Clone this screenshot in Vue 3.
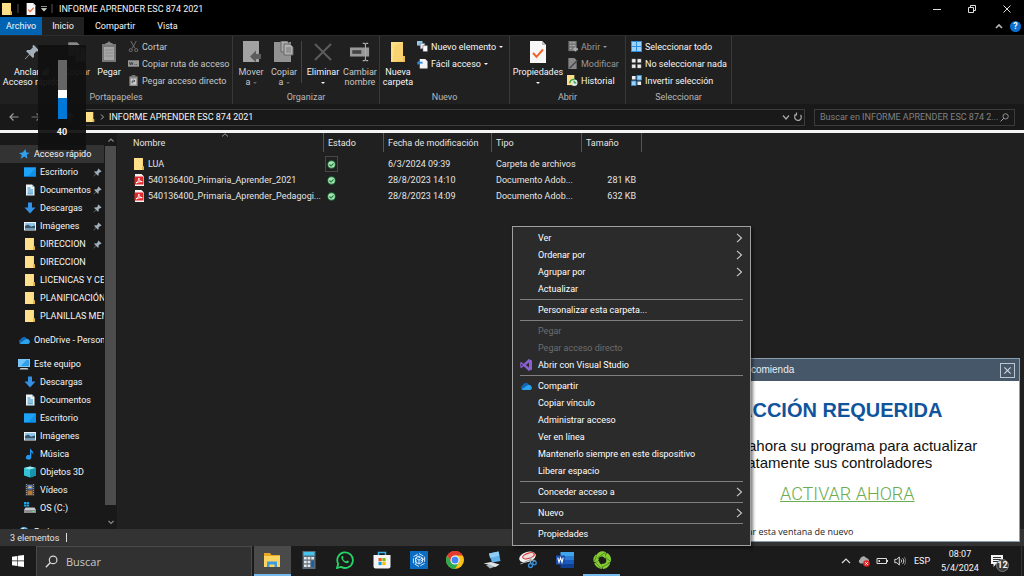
<script setup>
const pinned = [
  { t: 'Escritorio', i: 'desk', pin: true },
  { t: 'Documentos', i: 'doc', pin: true },
  { t: 'Descargas', i: 'down', pin: true },
  { t: 'Imágenes', i: 'img', pin: true },
  { t: 'DIRECCION', i: 'folder', pin: true },
  { t: 'DIRECCION', i: 'folder' },
  { t: 'LICENICAS Y CERT', i: 'folder' },
  { t: 'PLANIFICACIÓN', i: 'folder' },
  { t: 'PLANILLAS MENS', i: 'folder' },
]
const computer = [
  { t: 'Descargas', i: 'down' },
  { t: 'Documentos', i: 'doc' },
  { t: 'Escritorio', i: 'desk' },
  { t: 'Imágenes', i: 'img' },
  { t: 'Música', i: 'music' },
  { t: 'Objetos 3D', i: 'cube' },
  { t: 'Vídeos', i: 'video' },
  { t: 'OS (C:)', i: 'disk' },
]
const files = [
  { n: 'LUA', i: 'folder', d: '6/3/2024 09:39', t: 'Carpeta de archivos', s: '', focus: true },
  { n: '540136400_Primaria_Aprender_2021', i: 'pdf', d: '28/8/2023 14:10', t: 'Documento Adob...', s: '281 KB' },
  { n: '540136400_Primaria_Aprender_Pedagogi...', i: 'pdf', d: '28/8/2023 14:09', t: 'Documento Adob...', s: '632 KB' },
]
const menu = [
  [{ t: 'Ver', sub: true }, { t: 'Ordenar por', sub: true }, { t: 'Agrupar por', sub: true }, { t: 'Actualizar' }],
  [{ t: 'Personalizar esta carpeta...' }],
  [{ t: 'Pegar', off: true }, { t: 'Pegar acceso directo', off: true }, { t: 'Abrir con Visual Studio', i: 'vs' }],
  [
    { t: 'Compartir', i: 'cloud' }, { t: 'Copiar vínculo' }, { t: 'Administrar acceso' },
    { t: 'Ver en línea' }, { t: 'Mantenerlo siempre en este dispositivo' }, { t: 'Liberar espacio' },
  ],
  [{ t: 'Conceder acceso a', sub: true }],
  [{ t: 'Nuevo', sub: true }],
  [{ t: 'Propiedades' }],
]
const apps = [
  { i: 'explorer', n: 'Explorador de archivos', on: true },
  { i: 'calc', n: 'Calculadora' },
  { i: 'whatsapp', n: 'WhatsApp' },
  { i: 'store', n: 'Tienda' },
  { i: 'hex', n: 'Objetos' },
  { i: 'chrome', n: 'Chrome' },
  { i: 'remote', n: 'Equipo remoto' },
  { i: 'snip', n: 'Recortes' },
  { i: 'word', n: 'Word' },
  { i: 'green', n: 'Controladores', run: true },
]
</script>

<template>
  <svg class="sprite" aria-hidden="true">
    <symbol id="folder" viewBox="0 0 12 12"><path d="M1 0h9v8.500h1V12H1z" fill="#f3cf65" /><path d="M1 0h8.500v12H1z" fill="#ffe08a" /><path d="M9 8.500h2V12H9z" fill="#e3b548" /></symbol>
    <symbol id="desk" viewBox="0 0 12 12"><path d="M0 1.500h12v9H0z" fill="#0f8fe8" /><path d="M0 1.500h12L4 10.500H0z" fill="#1ea3fb" /><path d="M0 10h12v1H0z" fill="#0a6fc0" /></symbol>
    <symbol id="doc" viewBox="0 0 12 12"><path d="M2 .5h6l2.500 2.500v8.500H2z" fill="#eef3f6" /><path d="M8 .5V3h2.500z" fill="#b6c3cc" /><path d="M3.500 4h3M3.500 6h5.500M3.500 8h5.500M3.500 9.800h5.500" stroke="#2e8fc7" stroke-width="1" /></symbol>
    <symbol id="down" viewBox="0 0 12 12"><path d="M4 .5h4V5.500h3.500L6 11.500.5 5.500H4z" fill="#3391e6" /></symbol>
    <symbol id="img" viewBox="0 0 12 12"><path d="M0 2h12v8.500H0z" fill="#eef2f4" /><path d="M1 3h10v3H1z" fill="#8fc7ec" /><path d="M1 6l3-1.500 3 2 4-1v4H1z" fill="#35556b" /><path d="M1 8h10v1.500H1z" fill="#6c9cc0" /></symbol>
    <symbol id="music" viewBox="0 0 12 12"><path d="M6 0c.5 2 4 2.800 3.300 6.800-.5-1.800-1.300-2.300-2-2.300v5A2.700 2.300 0 1 1 6 7.300z" fill="#2498f0" /></symbol>
    <symbol id="cube" viewBox="0 0 12 12"><path d="M0 2l6-1.500L12 2v7.500l-6 2-6-2z" fill="#35c1d6" /><path d="M0 2l6-1.500L12 2 6 3.500z" fill="#9beaf2" /><path d="M6 3.500L12 2v7.500l-6 2z" fill="#1795ae" /></symbol>
    <symbol id="video" viewBox="0 0 12 12"><path d="M1.500 0h9v12h-9z" fill="#3a3a3f" /><path d="M3.500 1h5v4.500h-5z" fill="#5e82c9" /><path d="M3.500 6.500h5V11h-5z" fill="#b5783c" /><path d="M2.500 0v12M9.500 0v12" stroke="#aaa" stroke-width=".8" stroke-dasharray="1 1" /><path d="M4 4l2-2 2 2z" fill="#e8c850" /></symbol>
    <symbol id="disk" viewBox="0 0 12 12"><path d="M1.500 5.500h9L12 8v3H0V8z" fill="#c9ccce" /><path d="M0 8h12v3H0z" fill="#8b8f92" /><path d="M8.500 9h2v1h-2z" fill="#4ef08c" /><path d="M0 0h2.300v2H0zM2.700 0H5v2H2.700zM0 2.400h2.300v2H0zM2.700 2.400H5v2H2.700z" fill="#1ba6ea" /></symbol>
    <symbol id="star" viewBox="0 0 12 12"><path d="M7.500 1l.7 3.400 3.500.3-3 2 .7 4.100-3-2.200-3.800 2.200 1.200-3.800L1 4.900l3.700-.3z" fill="#2ea3f2" /></symbol>
    <symbol id="cloud" viewBox="0 0 12 8"><path d="M3 8a2.500 2.500 0 0 1-.4-4.800 3.500 3.500 0 0 1 6.200-.8A2.900 2.900 0 0 1 9.500 8z" fill="#1267b5" /><path d="M3 8l-1.500-.6L7.500 3.300c2-1 4 .3 4.300 2A2.200 2.200 0 0 1 9.600 8z" fill="#2ba4ec" /></symbol>
    <symbol id="pc" viewBox="0 0 12 12"><path d="M0 1h12v8H0z" fill="#8fd3fb" /><path d="M.8 1.800h10.400v6.400H.8z" fill="#2f9fe8" /><path d="M.8 1.800h8L2.500 8.200H.8z" fill="#6fc4f8" /><path d="M2.500 10h7l1 1.500h-9z" fill="#c6cdd2" /></symbol>
    <symbol id="net" viewBox="0 0 12 12"><circle cx="6" cy="6" r="5" fill="#65b8e8" /><path d="M2 4l3-2.500 2 2L4 6z" fill="#d5eefa" /></symbol>
    <symbol id="pin" viewBox="0 0 10 10"><path d="M6 .5L9.500 4 8.500 4.700 7.800 4.500 6.200 6.200 6.300 8 5.500 8.700 3.500 6.700 1 9.300.5 9.500.7 9 3.300 6.400 1.300 4.500 2 3.700 3.800 3.800 5.500 2.200 5.300 1.300z" fill="#a3afb8" /></symbol>
    <symbol id="pdf" viewBox="0 0 12 12"><path d="M2 0h6.500L11 2.500V12H2z" fill="#f6f0f0" /><path d="M1.500 2.500h9v8h-9z" fill="#e02a2a" /><path d="M3 9C5.200 7.800 6 5.800 5.800 4c.2 2.300 1.200 3.300 3.400 3.700C7 7.500 5 8 3 9z" stroke="#fff" stroke-width="1" fill="none" /></symbol>
    <symbol id="ok" viewBox="0 0 10 10"><circle cx="5" cy="5" r="4.600" fill="#1f7a3a" /><circle cx="5" cy="5" r="3.700" fill="#a9e3b8" /><path d="M2.800 5l1.700 1.700L7.300 3.700" stroke="#1b7034" stroke-width="1.200" fill="none" /></symbol>
    <symbol id="vs" viewBox="0 0 12 12"><path d="M8.800 0L12 1.400v9.200L8.800 12 3.700 7.200 1.400 9 .2 8.400V3.600L1.400 3l2.300 1.800zM9 3.600L5.900 6 9 8.400zM1.400 4.600v2.800L2.800 6z" fill="#8a5fd0" fill-rule="evenodd" /></symbol>
    <symbol id="sheetcheck" viewBox="0 0 16 22"><path d="M0 0h12l4 4v18H0z" fill="#f7f7f7" /><path d="M12 0v4h4z" fill="#bdbdbd" /><path d="M3 12l3.500 3.800L13 8.500" stroke="#f0642d" stroke-width="2" fill="none" /></symbol>
    <symbol id="lens" viewBox="0 0 12 12"><circle cx="7.500" cy="4.500" r="3.500" fill="none" stroke="currentColor" stroke-width="1.100" /><path d="M5 7L.8 11.200" stroke="currentColor" stroke-width="1.300" /></symbol>
    <symbol id="explorer" viewBox="0 0 18 16"><path d="M1 1h6l1.500 2H17v11H1z" fill="#e9a823" /><path d="M1 4h16v11H1z" fill="#fcd462" /><path d="M4 15V9.500h10V15h-2.500v-2.500h-5V15z" fill="#3e9be0" /></symbol>
    <symbol id="calc" viewBox="0 0 18 18"><path d="M2.500 0h13v18h-13z" fill="#5c6b78" /><path d="M3.500 1h11v3.500h-11z" fill="#45c4f0" /><path d="M4 6h2.700v2.500H4zM7.600 6h2.700v2.500H7.600zM11.300 6H14v2.500h-2.700zM4 9.700h2.700v2.500H4zM7.600 9.700h2.700v2.500H7.600zM4 13.500h2.700V16H4zM7.600 13.500h2.700V16H7.600z" fill="#e3e8ec" /><path d="M11.300 9.700H14V16h-2.700z" fill="#1c5fa8" /></symbol>
    <symbol id="whatsapp" viewBox="0 0 18 18"><path d="M1 17l1.200-4.200A7.800 7.800 0 1 1 5.200 15.900z" fill="none" stroke="#25d366" stroke-width="1.800" /><path d="M5.500 5.500c.8-1.200 1.500-.9 2 .8.200.7-.8 1-.4 1.600.8 1.300 1.500 1.900 2.800 2.400.6.200.9-1 1.500-.8 1.800.7 2 1.100.9 2.200-2.400 2-8-3-6.800-6.200z" fill="#25d366" /></symbol>
    <symbol id="store" viewBox="0 0 18 18"><path d="M5.500 5V1.500h7V5" fill="none" stroke="#35b6e8" stroke-width="1.500" /><path d="M.5 4h17v11.500a2 2 0 0 1-2 2h-13a2 2 0 0 1-2-2z" fill="#f4f4f4" /><path d="M5.500 7h3.200v3.200H5.500z" fill="#f25022" /><path d="M9.400 7h3.200v3.200H9.400z" fill="#7fba00" /><path d="M5.500 10.900h3.200v3.200H5.500z" fill="#00a4ef" /><path d="M9.400 10.900h3.200v3.200H9.400z" fill="#ffb900" /></symbol>
    <symbol id="hex" viewBox="0 0 18 18"><path d="M0 0h18v18H0z" fill="#0b6cc4" /><g fill="none" stroke="#cfe6fa" stroke-width="1"><path d="M9 2.500l5.600 3.200v6.600L9 15.500l-5.600-3.200V5.700z" stroke-dasharray="5 1.500" /><path d="M9 5l3.500 2v4L9 13l-3.500-2V7zM5.500 7L9 9l3.500-2M9 9v4M6 4.500l4 2.300M14 8l-3.500 2M6 13V9" /></g></symbol>
    <symbol id="chrome" viewBox="0 0 18 18"><circle cx="9" cy="9" r="9" fill="#fbc116" /><path d="M1.200 4.500A9 9 0 0 1 16.800 4.500H9L5.100 11.250z" fill="#e33b2e" /><path d="M1.200 4.500A9 9 0 0 0 9 18l3.900-6.750H5.100z" fill="#2da94f" /><circle cx="9" cy="9" r="4.500" fill="#fff" /><circle cx="9" cy="9" r="3.500" fill="#4285f4" /></symbol>
    <symbol id="remote" viewBox="0 0 18 18"><path d="M6 2.500l9.500-2L17.500 10 9 11.500z" fill="#5fb2ea" /><path d="M6 2.500l9.500-2 1 4L7 7z" fill="#8fcdf4" /><path d="M.5 12.500L8 11l8.500 2.500-4 2.500-4.500-.5L5 13.500z" fill="#dfe4e8" /><path d="M3 14l4-.5 4 2.500-4 1.500z" fill="#aab4bb" /></symbol>
    <symbol id="snip" viewBox="0 0 18 18"><ellipse cx="8.500" cy="6" rx="8.500" ry="5" transform="rotate(-18 8.500 6)" fill="#f2f2f2" /><ellipse cx="9.500" cy="4.800" rx="6" ry="2.600" transform="rotate(-18 9.500 4.800)" fill="#f4dcdc" stroke="#d43a33" stroke-width="1.200" /><path d="M1.500 13l9-4 6 .5M12 6l-.5 7" stroke="#9aa4ab" stroke-width="1.200" fill="none" /><circle cx="11.500" cy="14.500" r="2" fill="none" stroke="#3a8fd8" stroke-width="1.300" /><circle cx="15.500" cy="12" r="1.800" fill="none" stroke="#3a8fd8" stroke-width="1.300" /></symbol>
    <symbol id="word" viewBox="0 0 18 18"><path d="M4.500 1H18v4.200H4.500z" fill="#41a5ee" /><path d="M4.500 5H18v4.200H4.500z" fill="#2b7cd3" /><path d="M4.500 9H18v4H4.500z" fill="#185abd" /><path d="M4.500 13H18v4H4.500z" fill="#103f91" /><path d="M0 4.500h9v9H0z" fill="#1b4fae" /><path d="M1.800 6.700l1.200 4.600 1.500-4.400L6 11.300l1.200-4.600" stroke="#fff" stroke-width="1.100" fill="none" /></symbol>
    <symbol id="green" viewBox="0 0 18 18"><g fill="#86cc34"><path d="M3 5C4.500.5 9.500-1 13 1.200L12 7.500C9.500 4.500 7 5 5 8z" /><path d="M13.800 1.700c3.800 1.800 4.800 5.500 3.900 9L12.800 12c1-3 .4-4.200-1-5.500z" /><path d="M17.300 11.500c-1 4-4.300 6.500-7.500 6.400L8.500 13c2.500 0 3.800-.7 5-2z" /><path d="M8.800 17.900C5 17.500 2.200 15.200 1.200 12.200L6 9.800c.2 2 1 3 3 4z" /><path d="M1 11.300C-.5 8 .8 5.500 3 3.500L6 9c-1 .3-1 .9-1 1.500z" /></g><path d="M4.500 7L12 1.500M12.500 6.500l4.700 3.500M16.500 12L9.500 16M7.500 17L3 12M1.200 10.500L3.500 5" stroke="#3f8014" stroke-width=".8" /></symbol>
  </svg>

  <div class="screen">
    <header class="titlebar">
      <svg class="i12"><use href="#folder" /></svg>
      <i class="tick"></i>
      <svg class="i12"><use href="#sheetcheck" /></svg>
      <svg class="caret" viewBox="0 0 6 6"><path d="M0 .5h6M.5 2.500h5L3 5.200z" stroke="#ccc" stroke-width=".7" fill="#ccc" /></svg>
      <i class="tick"></i>
      <h1>INFORME APRENDER ESC 874 2021</h1>
      <div class="winbtns">
        <button aria-label="Minimizar"><svg viewBox="0 0 10 10"><path d="M1 5.500h8" stroke="#ddd" /></svg></button>
        <button aria-label="Restaurar"><svg viewBox="0 0 10 10"><path d="M1.500 3.500h5v5h-5zM3.500 3V1.500h5v5H7" stroke="#ddd" fill="none" /></svg></button>
        <button aria-label="Cerrar"><svg viewBox="0 0 10 10"><path d="M1.500 1.500l7 7M8.500 1.500l-7 7" stroke="#ddd" /></svg></button>
      </div>
    </header>

    <nav class="tabs">
      <button class="file">Archivo</button>
      <button class="current">Inicio</button>
      <button>Compartir</button>
      <button>Vista</button>
      <span class="tabend">
        <svg viewBox="0 0 8 6"><path d="M1 5l3-3 3 3" stroke="#bbb" stroke-width="1.600" fill="none" /></svg>
        <button class="help" aria-label="Ayuda">?</button>
      </span>
    </nav>

    <section class="ribbon">
      <div class="group g1">
        <div class="tools">
          <button class="big w62"><svg viewBox="0 0 16 22"><use href="#pin" x="0" y="3" width="16" height="16" /></svg><span>Anclar al<br />Acceso rápido</span></button>
          <button class="big w28 dim"><svg viewBox="0 0 20 22"><path d="M1 1h9l3 3v11H1zM8 6h8l3 3v12H8z" fill="#8a8a8a" stroke="#222" stroke-width=".6" /></svg><span>Copiar</span></button>
          <button class="big w36"><svg viewBox="0 0 16 22"><path d="M1 3h14v18H1z" fill="#777" /><path d="M3 6h10v13H3z" fill="#a6a6a6" /><path d="M4.500 4V2h2a1.500 1.500 0 0 1 3 0h2v2z" fill="#888" /><path d="M4 9h8M4 12h8M4 15h8" stroke="#8c8c8c" /></svg><span>Pegar</span></button>
          <div class="list dim">
            <button><svg viewBox="0 0 12 12"><path d="M3 0l4.500 8M9 0L4.500 8" stroke="#777" /><circle cx="3" cy="10" r="1.700" fill="none" stroke="#777" /><circle cx="9" cy="10" r="1.700" fill="none" stroke="#777" /></svg>Cortar</button>
            <button><svg viewBox="0 0 12 12"><path d="M0 2.500h12v7H0z" fill="#999" /><path d="M1.500 4.500l1 3 1-3 1 3 1-3M7 7h1M9 7h1" stroke="#333" fill="none" stroke-width=".8" /></svg>Copiar ruta de acceso</button>
            <button><svg viewBox="0 0 12 12"><path d="M1.500 1.500h9V12h-9z" fill="#8f8f8f" /><path d="M4 0h4v2.500H4z" fill="#777" /><path d="M3 4h6v6.500H3z" fill="#ccc" /><path d="M4.500 9V6.500H7M6 5l1.500 1.500L6 8" stroke="#444" fill="none" /></svg>Pegar acceso directo</button>
          </div>
        </div>
        <p>Portapapeles</p>
      </div>
      <div class="group g2">
        <div class="tools">
          <button class="big w36 dim"><svg viewBox="0 0 20 22"><path d="M2 0h16v21H2z" fill="#a2a2a2" /><path d="M9 15.500l6-6v3.500h6v5h-6v3.500z" fill="#5c5c5c" /></svg><span>Mover<br />a <i class="dn"></i></span></button>
          <button class="big w28 dim"><svg viewBox="0 0 20 22"><path d="M0 1h17v20H0z" fill="#929292" /><path d="M7 0h6l2 2v9H7z" fill="#aaa" stroke="#666" /><path d="M10 3h6l3 3v8h-9z" fill="#b2b2b2" stroke="#666" /><path d="M12 7h5M12 9h5M12 11h5" stroke="#777" /></svg><span>Copiar<br />a <i class="dn"></i></span></button>
          <i class="minisep"></i>
          <button class="big w36"><svg viewBox="0 0 20 22"><path d="M2 3l16 16M18 3L2 19" stroke="#5d5d5d" stroke-width="2" /></svg><span>Eliminar<br /><i class="dn"></i></span></button>
          <button class="big w36 dim"><svg viewBox="0 0 22 22"><path d="M0 6h21v10H0z" fill="#999" /><path d="M2.500 9h10v4h-10z" fill="#444" /><path d="M14 1.500h2l1 1 1-1h2M17 2.500v17M14 20.500h2l1-1 1 1h2" stroke="#aaa" fill="none" stroke-width="1.200" /></svg><span>Cambiar<br />nombre</span></button>
        </div>
        <p>Organizar</p>
      </div>
      <div class="group g3">
        <div class="tools">
          <button class="big w36"><svg viewBox="0 0 16 22"><path d="M1 1h12v14h2v6H1z" fill="#eebf55" /><path d="M1 1h12v19H4L1 21z" fill="#ffdf86" /><path d="M3 21l1-16 9-4v19z" fill="#f9d272" /></svg><span>Nueva<br />carpeta</span></button>
          <div class="list">
            <button><svg viewBox="0 0 12 12"><path d="M0 0h6v5H0z" fill="#8fc9ee" /><path d="M3.500 2.500h5v6h-5z" fill="#e8e8e8" stroke="#456" stroke-width=".5" /><path d="M6.500 5h5v6.500h-5z" fill="#f8f8f8" stroke="#557" stroke-width=".5" /></svg>Nuevo elemento <i class="dn"></i></button>
            <button><svg viewBox="0 0 12 12"><path d="M3 1h6l2.500 2.500v8H3z" fill="#f4f4f4" /><path d="M0 5l3-2.500V4h3v2.500C4 5.500 2 6 1 8z" fill="#2b8be0" /></svg>Fácil acceso <i class="dn"></i></button>
          </div>
        </div>
        <p>Nuevo</p>
      </div>
      <div class="group g4">
        <div class="tools">
          <button class="big w56"><svg viewBox="0 0 16 22"><use href="#sheetcheck" width="16" height="22" /></svg><span>Propiedades<br /><i class="dn"></i></span></button>
          <div class="list">
            <button class="off"><svg viewBox="0 0 12 12"><path d="M1.500 0h9v11h-9z" fill="#777" /><path d="M3 2h2M3 5h2M3 8h2M6 2h3M6 5h3" stroke="#bbb" /><path d="M6 9l4-3v2h2v2h-2v2z" fill="#aaa" /></svg>Abrir <i class="dn"></i></button>
            <button class="off"><svg viewBox="0 0 12 12"><path d="M1.500 0H8l2.500 2.500V12h-9z" fill="#888" /><path d="M2 11L11 2l1 1-8.500 8.500z" fill="#444" /></svg>Modificar</button>
            <button><svg viewBox="0 0 12 12"><path d="M0 0h8v11H0z" fill="#ffe08a" /><circle cx="8" cy="8.500" r="3.500" fill="#dfe6e2" /><path d="M3 9c0-3 2-4.500 5-4M8 8.500V6.500M8 8.500h2" stroke="#36a845" stroke-width="1.600" fill="none" /></svg>Historial</button>
          </div>
        </div>
        <p>Abrir</p>
      </div>
      <div class="group g5">
        <div class="tools">
          <div class="list far">
            <button><svg viewBox="0 0 12 12"><path d="M0 0h12v12H0z" fill="#2d8fdd" /><path d="M1 1h4.400v4.400H1zM6.600 1H11v4.400H6.600zM1 6.600h4.400V11H1zM6.600 6.600H11V11H6.600z" fill="#9dd3f8" /></svg>Seleccionar todo</button>
            <button><svg viewBox="0 0 12 12"><path d="M1 1h4v4H1zM7 1h4v4H7zM1 7h4v4H1zM7 7h4v4H7z" fill="#eee" stroke="#888" stroke-width=".4" /></svg>No seleccionar nada</button>
            <button><svg viewBox="0 0 12 12"><path d="M1 1h4v4H1zM7 7h4v4H7z" fill="#eee" /><path d="M6.500.5h5v5h-5zM.5 6.500h5v5h-5z" fill="#9dd3f8" stroke="#2d8fdd" /></svg>Invertir selección</button>
          </div>
        </div>
        <p>Seleccionar</p>
      </div>
    </section>

    <section class="address">
      <button class="arrow" aria-label="Atrás"><svg viewBox="0 0 10 10"><path d="M9.500 5H1M4.500 1.500L1 5l3.500 3.500" stroke="#999" stroke-width="1.200" fill="none" /></svg></button>
      <button class="arrow" aria-label="Adelante"><svg viewBox="0 0 10 10"><path d="M.5 5H9M5.500 1.500L9 5 5.500 8.500" stroke="#777" stroke-width="1.200" fill="none" /></svg></button>
      <button class="arrow up" aria-label="Subir"><svg viewBox="0 0 10 10"><path d="M5 9.500V1M1.500 4.500L5 1l3.500 3.500" stroke="#999" stroke-width="1.200" fill="none" /></svg></button>
      <div class="path">
        <svg class="pfolder"><use href="#folder" /></svg>
        <svg class="pchev" viewBox="0 0 6 6"><path d="M2 .5L4.500 3 2 5.500" stroke="#aaa" fill="none" /></svg>
        <span>INFORME APRENDER ESC 874 2021</span>
        <svg class="pico" viewBox="0 0 10 10"><path d="M2 3.500L5 7l3-3.500" stroke="#aaa" stroke-width="1.200" fill="none" /></svg>
        <svg class="pico" viewBox="0 0 10 10"><path d="M3 2.500A3.300 3.300 0 1 0 7.500 3M3.500.5v2.500H1" stroke="#aaa" stroke-width="1.200" fill="none" /></svg>
      </div>
      <label class="find"><input type="text" aria-label="Buscar en carpeta" placeholder="Buscar en INFORME APRENDER ESC 874 2..." /><svg><use href="#lens" /></svg></label>
    </section>

    <main class="content">
      <aside class="side">
        <div class="tree">
          <a href="#" class="node root active"><svg><use href="#star" /></svg><span>Acceso rápido</span></a>
          <a v-for="(n, k) in pinned" :key="k" href="#" class="node"><svg><use :href="'#' + n.i" /></svg><span>{{ n.t }}</span><svg v-if="n.pin" class="pin"><use href="#pin" /></svg></a>
          <a href="#" class="node root gap"><svg><use href="#cloud" /></svg><span>OneDrive - Personal</span></a>
          <a href="#" class="node root gap"><svg><use href="#pc" /></svg><span>Este equipo</span></a>
          <a v-for="n in computer" :key="n.t" href="#" class="node"><svg><use :href="'#' + n.i" /></svg><span>{{ n.t }}</span></a>
          <a href="#" class="node root gap"><svg><use href="#net" /></svg><span>Red</span></a>
        </div>
        <div class="scroll">
          <svg viewBox="0 0 8 8"><path d="M1.500 5.500L4 3l2.500 2.500" stroke="#888" fill="none" stroke-width="1.200" /></svg>
          <i></i>
          <svg viewBox="0 0 8 8"><path d="M1.500 3L4 5.500 6.500 3" stroke="#888" fill="none" stroke-width="1.200" /></svg>
        </div>
      </aside>
      <div class="files">
        <table>
          <colgroup><col class="c1" /><col class="c2" /><col class="c3" /><col class="c4" /><col class="c5" /></colgroup>
          <thead>
            <tr><th>Nombre<svg class="sort" viewBox="0 0 8 4"><path d="M1 3.500L4 .8l3 2.700" stroke="#999" fill="none" /></svg></th><th>Estado</th><th>Fecha de modificación</th><th>Tipo</th><th>Tamaño</th></tr>
          </thead>
          <tbody>
            <tr v-for="f in files" :key="f.n">
              <td><span class="fname"><svg><use :href="'#' + f.i" /></svg>{{ f.n }}</span></td>
              <td><span class="state" :class="{ focus: f.focus }"><svg><use href="#ok" /></svg></span></td>
              <td>{{ f.d }}</td>
              <td>{{ f.t }}</td>
              <td class="num">{{ f.s }}</td>
            </tr>
          </tbody>
        </table>
      </div>
    </main>

    <footer class="status"><span>3 elementos</span><i></i></footer>

    <section class="taskbar">
      <button class="start" aria-label="Inicio"><svg viewBox="0 0 12 12"><path d="M0 1.700l5.400-.8v4.700H0zM6 .8L12 0v5.600H6zM0 6.200h5.400v4.900L0 10.300zM6 6.200h6V12l-6-.8z" fill="#fff" /></svg></button>
      <label class="search"><svg><use href="#lens" /></svg><input type="text" aria-label="Buscar" placeholder="Buscar" /></label>
      <div class="apps">
        <button v-for="a in apps" :key="a.i" :aria-label="a.n" :class="{ on: a.on, run: a.run }"><svg><use :href="'#' + a.i" /></svg></button>
      </div>
      <div class="tray">
        <svg viewBox="0 0 12 12"><path d="M2 8l4-4 4 4" stroke="#ddd" fill="none" stroke-width="1.200" /></svg>
        <svg viewBox="0 0 12 12"><path d="M2.500 8.500A2.300 2.300 0 0 1 2 4.300 3.400 3.400 0 0 1 8.300 3 2.800 2.800 0 0 1 9 8.500z" fill="#aaa" /><circle cx="8.500" cy="8.500" r="3.300" fill="#e0262c" /><path d="M7.200 7.200l2.600 2.600M9.800 7.200L7.200 9.800" stroke="#fff" /></svg>
        <svg viewBox="0 0 12 12"><path d="M1 3.500h9.500v5H1z" stroke="#ddd" fill="none" /><path d="M10.500 5H12v2h-1.500zM2.500 5H4v2H2.500z" fill="#ddd" /></svg>
        <svg viewBox="0 0 12 12"><path d="M.8 4.300h2L5.300 2v8L2.800 7.700h-2z" stroke="#ddd" fill="none" /><path d="M7 4.500c.8 1 .8 2 0 3M8.700 3.300c1.500 1.700 1.500 3.700 0 5.400" stroke="#ddd" fill="none" /><path d="M10.300 2c1.900 2.500 1.900 5.500 0 8" stroke="#777" fill="none" /></svg>
        <span class="lang">ESP</span>
        <span class="clock">08:07<br />5/4/2024</span>
        <button class="note" aria-label="Notificaciones"><svg viewBox="0 0 14 14"><path d="M1 1h12v9H6l-2.500 3V10H1z" fill="#f2f2f2" /><path d="M3 3.500h8M3 5.500h8M3 7.500h6" stroke="#333" /></svg><b>12</b></button>
      </div>
    </section>

    <section class="popup" role="dialog" aria-label="Aviso">
      <header><span>recomienda</span><button aria-label="Cerrar aviso"><svg viewBox="0 0 10 10"><path d="M1.500 1.500l7 7M8.500 1.500l-7 7" stroke="#cfd6dc" stroke-width="1.200" /></svg></button></header>
      <div class="pbody">
        <h2>ACCIÓN REQUERIDA</h2>
        <p>Active ahora su programa para actualizar<br />inmediatamente sus controladores</p>
        <a href="#">ACTIVAR AHORA</a>
        <small>No mostrar esta ventana de nuevo</small>
      </div>
    </section>

    <div class="menu" role="menu">
      <div v-for="(g, k) in menu" :key="k" class="mgroup">
        <button v-for="m in g" :key="m.t" role="menuitem" :disabled="m.off">
          <svg v-if="m.i" class="mi"><use :href="'#' + m.i" /></svg>
          <span>{{ m.t }}</span>
          <svg v-if="m.sub" class="ms" viewBox="0 0 7 10"><path d="M1 .8L5.500 5 1 9.200" stroke="#ccc" fill="none" stroke-width="1.100" /></svg>
        </button>
      </div>
    </div>

    <div class="volume"><span class="track"><i></i></span><output>40</output></div>
  </div>
</template>

<style>
body { background: #202020; overflow: hidden; }
</style>

<style scoped>
* { box-sizing: border-box; }
.sprite { position: absolute; width: 0; height: 0; }
button, input { font: inherit; color: inherit; background: none; border: 0; padding: 0; margin: 0; outline: 0; }
svg { flex: none; display: block; }
h1, h2, p { margin: 0; font-weight: inherit; }
a { color: inherit; text-decoration: none; }
.screen { position: relative; height: 100vh; display: flex; flex-direction: column; background: #202020; color: #f6f6f6; font: 400 9px/12px Roboto, "Open Sans", sans-serif; overflow: hidden; white-space: nowrap; }

.titlebar { flex: none; height: 17px; background: #000; display: flex; align-items: center; padding-left: 1px; }
.i12 { width: 12px; height: 12px; }
.tick { width: 2px; height: 9px; background: #2a2a2a; margin: 0 6px 0 4px; }
.caret { width: 6px; height: 6px; margin-left: 4px; }
.titlebar h1 { font-size: 9px; }
.winbtns { margin-left: auto; display: flex; }
.winbtns button { width: 35px; height: 17px; display: grid; place-items: center; }
.winbtns svg { width: 10px; height: 10px; }

.tabs { flex: none; height: 18px; background: #000; display: flex; }
.tabs > button { height: 18px; padding: 0 11px; }
.tabs .file { width: 42px; padding: 0; background: #0063b1; }
.tabs .current { width: 42px; padding: 0; background: #202020; }
.tabend { margin-left: auto; display: flex; align-items: center; gap: 7px; padding-right: 3px; }
.tabend svg { width: 8px; height: 6px; }
.help { width: 11px; height: 11px; border-radius: 50%; background: #0a6fd0; font-weight: 700; line-height: 11px; }

.ribbon { flex: none; display: flex; height: 69px; border-top: 1px solid #2c2c2c; }
.group { display: flex; flex-direction: column; border-right: 1px solid #383838; }
.group > p { text-align: center; color: #b8b8b8; }
.g1 { width: 233px; }
.g2 { width: 147px; }
.g3 { width: 130px; }
.g4 { width: 116px; }
.g5 { width: 106px; }
.tools { height: 55px; display: flex; padding-top: 2px; }
.big { display: flex; flex-direction: column; align-items: center; align-self: flex-start; gap: 4px; text-align: center; line-height: 10px; padding-top: 3px; }
.big svg { width: 20px; height: 22px; }
.w62 { width: 63px; }
.w36 { width: 36px; }
.w28 { width: 28px; }
.w56 { width: 56px; }
.dim { color: #c8c8c8; }
.off { color: #989898; }
.dn { display: inline-block; border: 2px solid transparent; border-top: 2px solid currentColor; border-bottom: 0; vertical-align: middle; }
.dim .dn { opacity: 0.4; }
.minisep { width: 1px; height: 42px; background: #444; margin: 3px 2px 0; }
.g2 .tools { gap: 1px; }
.list { display: flex; flex-direction: column; padding-left: 1px; }
.far { padding-left: 5px; }
.list button { height: 17px; display: flex; align-items: center; gap: 3px; }
.list svg { width: 11px; height: 11px; }

.address { flex: none; height: 26px; background: #191919; display: flex; align-items: center; padding: 0 9px; }
.arrow { width: 22px; }
.arrow svg { width: 10px; height: 10px; }
.up { margin-left: 12px; width: 16px; }
.path { flex: 1; height: 17px; border: 1px solid #3c3c3c; display: flex; align-items: center; padding: 0 1px 0 3px; }
.path span { flex: 1; }
.pfolder { width: 10px; height: 12px; }
.pchev { width: 6px; height: 6px; margin: 0 4px; }
.pico { width: 10px; height: 10px; margin-left: 2px; }
.find { width: 201px; height: 17px; margin-left: 9px; border: 1px solid #3c3c3c; display: flex; align-items: center; padding: 0 5px; color: #aaa; }
.find input { flex: 1; min-width: 0; height: 15px; }
.find input::placeholder { color: #808080; }
.find svg { width: 9px; height: 9px; }

.content { flex: 1; min-height: 0; display: flex; border-top: 3px solid #f4f4f4; }
.side { width: 118px; flex: none; display: flex; background: #191919; border-right: 1px solid #222; overflow: hidden; }
.tree { width: 104px; padding-top: 12px; overflow: hidden; }
.node { height: 18px; display: flex; align-items: center; gap: 4px; padding-left: 24px; position: relative; }
.node svg { width: 12px; height: 12px; }
.root { padding-left: 18px; }
.gap { margin-top: 6px; }
.active { background: #333; }
.node .pin { position: absolute; right: 2px; width: 9px; height: 9px; }
.scroll { margin-left: 1px; width: 11px; display: flex; flex-direction: column; align-items: center; padding: 3px 0; }
.scroll i { flex: 1; width: 11px; background: #4d4d4d; margin: 2px 0 13px; }
.scroll svg { width: 8px; height: 8px; }
.files { flex: 1; min-width: 0; }
table { border-collapse: separate; border-spacing: 0; table-layout: fixed; width: 524px; }
.c1 { width: 206px; }
.c2 { width: 60px; }
.c3 { width: 108px; }
.c4 { width: 90px; }
.c5 { width: 60px; }
th { position: relative; height: 19px; padding: 0 0 0 4px; text-align: left; font-weight: inherit; border-right: 1px solid #555; color: #e4e4e4; }
td { height: 16px; padding: 0 0 0 4px; color: #e4e4e4; }
th:first-child, td:first-child { padding-left: 15px; }
tbody::before { content: ""; display: block; height: 4px; }
.sort { position: absolute; left: 103px; top: 0; width: 8px; height: 4px; }
.fname { display: flex; align-items: center; gap: 3px; }
.fname svg { width: 12px; height: 12px; }
.state { width: 13px; height: 16px; display: grid; place-items: center; margin-left: -3px; }
.state svg { width: 9px; height: 9px; }
.focus { outline: 1px solid #484848; outline-offset: -1px; }
.num { text-align: right; padding-right: 6px; }

.status { flex: none; height: 17px; background: #333; display: flex; align-items: center; padding-left: 10px; gap: 7px; color: #e4e4e4; }
.status i { width: 1px; height: 9px; background: #ddd; }

.taskbar { flex: none; height: 30px; background: #1b1b1b; display: flex; }
.start { width: 36px; display: grid; place-items: center; }
.start svg { width: 12px; height: 12px; }
.search { width: 216px; display: flex; align-items: center; gap: 8px; padding-left: 8px; background: #313131; border: 1px solid #4a4a4a; border-bottom: 0; color: #d8d8d8; font: 400 11px/16px "Open Sans", sans-serif; }
.search svg { width: 13px; height: 13px; }
.search input { flex: 1; min-width: 0; height: 20px; }
.search input::placeholder { color: #c8c8c8; }
.apps { flex: 0 0 366px; margin-left: 2px; display: flex; }
.apps button { flex: 1; display: grid; place-items: center; border-bottom: 2px solid transparent; }
.apps .on { background: #4a4a4a; }
.apps .on, .apps .run { border-bottom-color: #76b9ed; }
.apps svg { width: 18px; height: 18px; }
.tray { margin-left: auto; display: flex; align-items: center; gap: 6px; padding-right: 11px; border-right: 1px solid #333; margin-right: 2px; }
.tray svg { width: 12px; height: 12px; }
.lang { width: 20px; text-align: center; }
.clock { width: 44px; text-align: center; line-height: 14px; }
.tray .note { position: relative; width: 20px; height: 20px; margin-left: 2px; }
.tray .note svg { width: 14px; height: 14px; }
.note b { position: absolute; left: 6px; top: 8px; width: 13px; height: 13px; border-radius: 50%; background: #3b3b3b; border: 1px solid #777; font-size: 9px; line-height: 11px; }

.popup { position: absolute; right: 4px; bottom: 34px; width: 330px; height: 184px; background: #fff; border: 1px solid #8a9fb0; color: #111; font-family: "Liberation Sans", Arial, sans-serif; }
.popup header { height: 22px; background: #465769; color: #e8edf0; display: flex; align-items: center; justify-content: space-between; padding: 0 4px 0 51px; font-size: 10px; }
.popup header button { width: 15px; height: 15px; border: 1px solid #bcc6ce; display: grid; place-items: center; }
.popup header svg { width: 9px; height: 9px; }
.pbody { display: flex; flex-direction: column; align-items: flex-start; padding-left: 12px; }
.pbody h2 { font-size: 20px; line-height: 24px; margin: 17px 0 0 35px; color: #10549c; font-weight: 700; }
.pbody p { font-size: 15px; line-height: 17px; margin-top: 15px; }
.pbody a { font: 300 18px/22px Roboto, sans-serif; color: #6aac4e; text-decoration: underline; margin: 12px 0 0 77px; }
.pbody small { font: 9px/12px "Open Sans", sans-serif; margin: 21px 0 0 5px; color: #222; }

.menu { position: absolute; left: 512px; bottom: 30px; width: 239px; padding: 2px 7px 3px; background: #2b2b2b; border: 1px solid #a0a0a0; color: #fff; box-shadow: 2px 2px 3px rgba(0, 0, 0, 0.5); }
.mgroup + .mgroup { border-top: 1px solid #808080; margin-top: 2px; padding-top: 1px; }
.menu button { width: 100%; height: 17px; display: flex; align-items: center; position: relative; padding-left: 18px; }
.menu button:disabled { color: #6d6d6d; }
.mi { position: absolute; left: 0; width: 12px; height: 12px; }
.ms { width: 7px; height: 10px; margin-left: auto; }

.volume { position: absolute; left: 38px; top: 45px; width: 48px; height: 105px; background: rgba(16, 16, 16, 0.94); display: flex; flex-direction: column; align-items: center; padding-top: 15px; gap: 7px; font-weight: 700; }
.track { width: 9px; height: 59px; background: #666; display: flex; align-items: flex-end; }
.track i { width: 9px; height: 29px; background: #0078d7; border-top: 8px solid #fff; }
</style>
